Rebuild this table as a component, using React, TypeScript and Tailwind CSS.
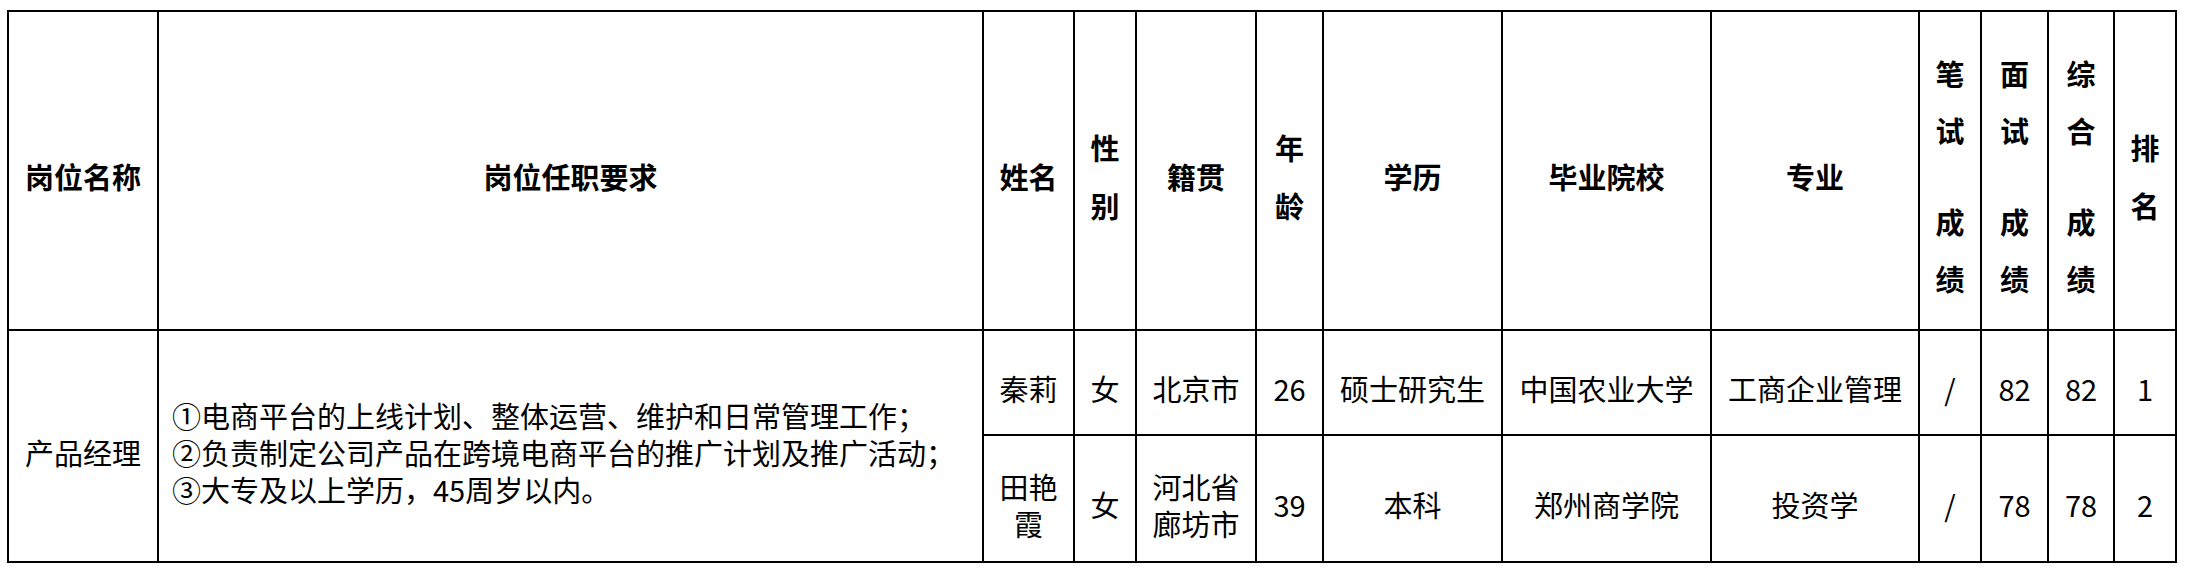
import React from "react";

const H = "flex items-center justify-center bg-white pt-[10px] text-center font-bold leading-[58px]";
const B = "flex items-center justify-center bg-white pt-[12px] text-center leading-[37px]";

function Score({ a, b }: { a: string; b: string }) {
  return (
    <div className={H}>
      <div className="flex flex-col items-center gap-[34px]">
        <div className="leading-[57px]">
          {a}
          <br />
          试
        </div>
        <div className="leading-[57px]">
          成
          <br />
          绩
        </div>
      </div>
    </div>
  );
}

export default function App() {
  const row1 = ["秦莉", "女", "北京市", "26", "硕士研究生", "中国农业大学", "工商企业管理", "/", "82", "82", "1"];
  return (
    <div className="min-h-[569px] w-[2189px] bg-white pl-[7px] pt-[10px] font-['Noto_Sans_CJK_SC','Noto_Sans_CJK_JP',sans-serif] text-[29px] text-black">
      <div className="grid w-fit grid-cols-[148px_823px_89px_60px_118px_65px_177px_207px_206px_60px_65px_64px_60px] grid-rows-[317px_103px_125px] gap-[2px] bg-black p-[2px]">
        <div className={H}>岗位名称</div>
        <div className={H}>岗位任职要求</div>
        <div className={H}>姓名</div>
        <div className={H}>
          <div>
            性
            <br />
            别
          </div>
        </div>
        <div className={H}>籍贯</div>
        <div className={H}>
          <div>
            年
            <br />
            龄
          </div>
        </div>
        <div className={H}>学历</div>
        <div className={H}>毕业院校</div>
        <div className={H}>专业</div>
        <Score a="笔" b="" />
        <Score a="面" b="" />
        <div className={H}>
          <div className="flex flex-col items-center gap-[34px]">
            <div className="leading-[57px]">
              综
              <br />
              合
            </div>
            <div className="leading-[57px]">
              成
              <br />
              绩
            </div>
          </div>
        </div>
        <div className={H}>
          <div>
            排
            <br />
            名
          </div>
        </div>

        <div className={`${B} row-span-2`}>产品经理</div>
        <div className={`${B} row-span-2 justify-start pl-[13px] text-left`}>
          <div>
            ①电商平台的上线计划、整体运营、维护和日常管理工作；
            <br />
            ②负责制定公司产品在跨境电商平台的推广计划及推广活动；
            <br />
            ③大专及以上学历，45周岁以内。
          </div>
        </div>
        {row1.map((t, i) => (
          <div key={i} className={B}>
            {t}
          </div>
        ))}
        <div className={B}>
          <div>
            田艳
            <br />
            霞
          </div>
        </div>
        <div className={B}>女</div>
        <div className={B}>
          <div>
            河北省
            <br />
            廊坊市
          </div>
        </div>
        <div className={B}>39</div>
        <div className={B}>本科</div>
        <div className={B}>郑州商学院</div>
        <div className={B}>投资学</div>
        <div className={B}>/</div>
        <div className={B}>78</div>
        <div className={B}>78</div>
        <div className={B}>2</div>
      </div>
    </div>
  );
}
